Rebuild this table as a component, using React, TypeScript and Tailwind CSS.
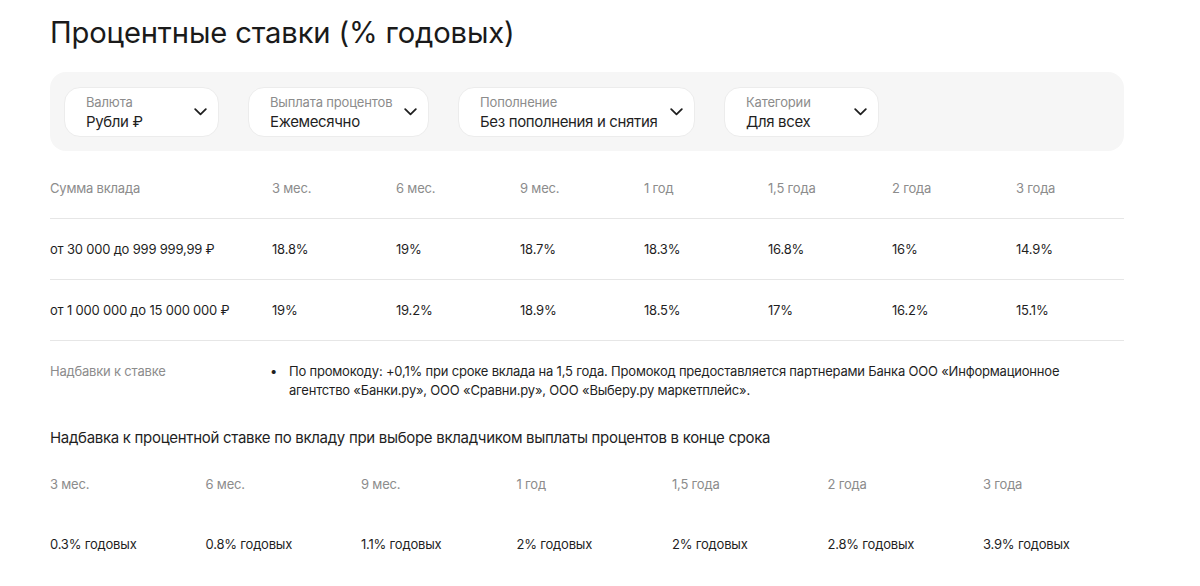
import React from "react";

const Chevron = () => (
  <svg width="13" height="8" viewBox="0 0 13 8" fill="none" className="shrink-0">
    <path d="M1.2 1.2 L6.5 6.3 L11.8 1.2" stroke="#1f1f1f" strokeWidth="1.8" strokeLinecap="round" strokeLinejoin="round" />
  </svg>
);

const Select = ({ label, value, w }: { label: string; value: string; w: string }) => (
  <div className={`${w} h-[50px] bg-white rounded-[16px] border border-[#ececec] flex items-center pl-[21px] pr-[11px]`}>
    <div className="flex-1 flex flex-col leading-none pt-[2px]">
      <span className="text-[13px] tracking-[-0.15px] text-[#8c8c8c] leading-[18px]">{label}</span>
      <span className="text-[15px] tracking-[-0.35px] text-[#1f1f1f] leading-[21px]">{value}</span>
    </div>
    <Chevron />
  </div>
);

const terms = ["3 мес.", "6 мес.", "9 мес.", "1 год", "1,5 года", "2 года", "3 года"];
const rows = [
  { sum: "от 30 000 до 999 999,99 ₽", vals: ["18.8%", "19%", "18.7%", "18.3%", "16.8%", "16%", "14.9%"] },
  { sum: "от 1 000 000 до 15 000 000 ₽", vals: ["19%", "19.2%", "18.9%", "18.5%", "17%", "16.2%", "15.1%"] },
];
const bonus = ["0.3% годовых", "0.8% годовых", "1.1% годовых", "2% годовых", "2% годовых", "2.8% годовых", "3.9% годовых"];

export default function App() {
  return (
    <div className="w-[1200px] h-[586px] bg-white overflow-hidden pl-[50px] pr-[76px] text-[#1f1f1f]" style={{ fontFamily: "Inter, 'Noto Sans', sans-serif" }}>
      <h1 className="pt-[14px] text-[29.2px] leading-[38px] font-normal tracking-[-0.15px] text-[#1a1a1a]">Процентные ставки (% годовых)</h1>
      <div className="mt-[20px] h-[79px] bg-[#f6f6f6] rounded-[16px] flex items-center gap-[29px] px-[14px]">
        <Select w="w-[155px]" label="Валюта" value="Рубли ₽" />
        <Select w="w-[181px]" label="Выплата процентов" value="Ежемесячно" />
        <Select w="w-[237px]" label="Пополнение" value="Без пополнения и снятия" />
        <Select w="w-[155px]" label="Категории" value="Для всех" />
      </div>

      <div className="text-[13px] tracking-[-0.2px]">
        <div className="mt-[6px] h-[62px] grid grid-cols-[222px_repeat(6,124px)_1fr] items-center border-b border-[#e6e6e6] text-[#8c8c8c] pt-[2px]">
          <span>Сумма вклада</span>
          {terms.map((t) => (
            <span key={t}>{t}</span>
          ))}
        </div>
        {rows.map((r) => (
          <div key={r.sum} className="h-[61px] grid grid-cols-[222px_repeat(6,124px)_1fr] items-center border-b border-[#e6e6e6] pt-[1px]">
            <span>{r.sum}</span>
            {r.vals.map((v, i) => (
              <span key={i}>{v}</span>
            ))}
          </div>
        ))}
        <div className="grid grid-cols-[222px_1fr] pt-[21px] leading-[19px]">
          <span className="text-[#8c8c8c]">Надбавки к ставке</span>
          <div className="flex">
            <span className="w-[17px] shrink-0 -ml-[2px] mr-[2px]">•</span>
            <span className="whitespace-nowrap">
              По промокоду: +0,1% при сроке вклада на 1,5 года. Промокод предоставляется партнерами Банка ООО «Информационное
              <br />
              агентство «Банки.ру», ООО «Сравни.ру», ООО «Выберу.ру маркетплейс».
            </span>
          </div>
        </div>
      </div>

      <h2 className="mt-[28px] text-[15px] tracking-[-0.3px] leading-[20px]">Надбавка к процентной ставке по вкладу при выборе вкладчиком выплаты процентов в конце срока</h2>
      <div className="text-[13px] tracking-[-0.2px] grid grid-cols-[repeat(7,155.5px)]">
        {terms.map((t) => (
          <span key={t} className="mt-[26px] h-[20px] text-[#8c8c8c] leading-[20px]">{t}</span>
        ))}
        {bonus.map((b, i) => (
          <span key={i} className="mt-[40px] leading-[20px]">{b}</span>
        ))}
      </div>
    </div>
  );
}
